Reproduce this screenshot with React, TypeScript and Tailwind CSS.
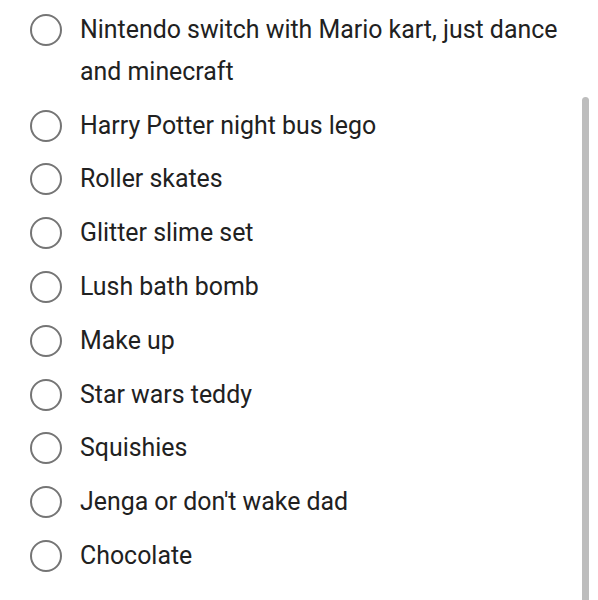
const ITEMS = [
  'Nintendo switch with Mario kart, just dance and minecraft',
  'Harry Potter night bus lego',
  'Roller skates',
  'Glitter slime set',
  'Lush bath bomb',
  'Make up',
  'Star wars teddy',
  'Squishies',
  "Jenga or don't wake dad",
  'Chocolate',
]

function Radio() {
  return (
    <span className="mt-[5px] w-[32px] h-[32px] rounded-full border-[2.5px] border-[#757575] shrink-0" />
  )
}

export default function App() {
  return (
    <div className="relative w-[598px] h-[600px] overflow-hidden bg-white" style={{ fontFamily: 'Roboto, "Noto Sans", sans-serif' }}>
      <div className="pt-[3px] pl-[30px] pr-[30px]">
        {ITEMS.map(t => (
          <div key={t} className="flex items-start gap-[18px] py-[6px]">
            <Radio />
            <p className="text-[24.9px] leading-[41.8px] text-[#212121]">{t}</p>
          </div>
        ))}
      </div>
      <div className="absolute left-[582px] top-[97px] w-[7px] h-[520px] rounded-full bg-[#bdbdbd]" />
    </div>
  )
}
